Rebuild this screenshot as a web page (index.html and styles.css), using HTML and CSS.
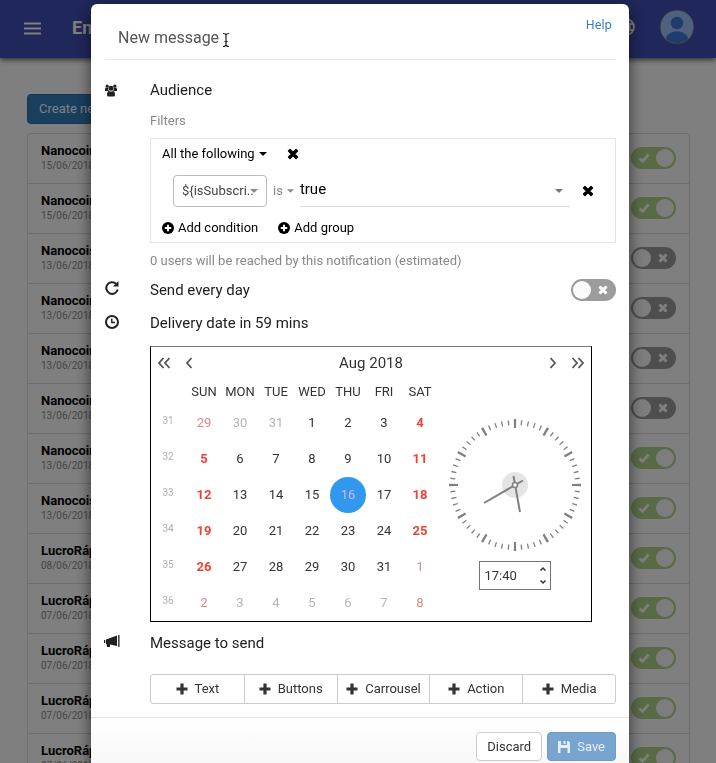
FILE: index.html
```html
<!DOCTYPE html>
<html lang="en">
<head>
<meta charset="utf-8">
<title>New message</title>
<link rel="stylesheet" href="styles.css">
</head>
<body>
<svg class="sprite" aria-hidden="true">
  <symbol id="i-x" viewBox="0 0 12 12"><path d="M3 1.5 6 4.5 9 1.5 10.5 3 7.5 6 10.5 9 9 10.5 6 7.5 3 10.5 1.5 9 4.5 6 1.5 3Z" fill="currentColor" stroke="currentColor" stroke-width="1.4" stroke-linejoin="round"/></symbol>
  <symbol id="i-check" viewBox="0 0 12 12"><path d="M1.5 6.5 4.5 9.3 10.5 2.7" fill="none" stroke="currentColor" stroke-width="2.6"/></symbol>
  <symbol id="i-plus" viewBox="0 0 12 12"><path d="M6 .5v11M.5 6h11" fill="none" stroke="currentColor" stroke-width="3.2"/></symbol>
  <symbol id="i-add" viewBox="0 0 12 12"><circle cx="6" cy="6" r="6" fill="currentColor"/><path d="M6 2.8v6.4M2.8 6h6.4" stroke="#fff" stroke-width="1.9"/></symbol>
  <symbol id="i-caret" viewBox="0 0 8 4"><path d="M0 0h8L4 4z" fill="currentColor"/></symbol>
  <symbol id="i-left" viewBox="0 0 8 14"><path d="M6.5 2 2 7l4.5 5" fill="none" stroke="currentColor" stroke-width="1.8"/></symbol>
  <symbol id="i-right" viewBox="0 0 8 14"><path d="M1.5 2 6 7l-4.5 5" fill="none" stroke="currentColor" stroke-width="1.8"/></symbol>
  <symbol id="i-left2" viewBox="0 0 14 14"><path d="M6.5 2 2 7l4.5 5M12.5 2 8 7l4.5 5" fill="none" stroke="currentColor" stroke-width="1.8"/></symbol>
  <symbol id="i-right2" viewBox="0 0 14 14"><path d="M1.5 2 6 7l-4.5 5M7.5 2 12 7l-4.5 5" fill="none" stroke="currentColor" stroke-width="1.8"/></symbol>
</svg>

<header class="topbar">
  <button class="menu" aria-label="Menu"><svg width="17" height="13" viewBox="0 0 17 13"><path d="M0 1.5h17M0 6.5h17M0 11.5h17" stroke="currentColor" stroke-width="2"/></svg></button>
  <h1 class="brand">En</h1>
  <svg class="globe" width="18" height="18" viewBox="0 0 18 18"><path d="M9 1a8 8 0 1 0 0 16A8 8 0 0 0 9 1ZM9 1c-5 5-5 11 0 16 5-5 5-11 0-16ZM2 6h14M2 12h14" fill="none" stroke="currentColor" stroke-width="1.8"/></svg>
  <svg class="avatar" width="36" height="36" viewBox="0 0 36 36"><circle cx="18" cy="18" r="17" fill="#a0c3ff" stroke="#666" stroke-width="1"/><circle cx="18" cy="14" r="6.2" fill="#4278d8"/><path d="M7 30c0-10 22-10 22 0-5 5.5-17 5.5-22 0Z" fill="#4278d8"/></svg>
</header>
<main class="page">
  <button class="create">Create new message</button>
  <ul class="list">
    <li><div><b>Nanocoins</b><small>15/06/2018</small></div><label class="switch"><input type="checkbox" role="switch" aria-label="Active" checked><svg class="on"><use href="#i-check"/></svg></label></li>
    <li><div><b>Nanocoins</b><small>15/06/2018</small></div><label class="switch"><input type="checkbox" role="switch" aria-label="Active" checked><svg class="on"><use href="#i-check"/></svg></label></li>
    <li><div><b>Nanocoisa</b><small>13/06/2018</small></div><label class="switch"><input type="checkbox" role="switch" aria-label="Active"><svg class="off"><use href="#i-x"/></svg></label></li>
    <li><div><b>Nanocoins</b><small>13/06/2018</small></div><label class="switch"><input type="checkbox" role="switch" aria-label="Active"><svg class="off"><use href="#i-x"/></svg></label></li>
    <li><div><b>Nanocoins</b><small>13/06/2018</small></div><label class="switch"><input type="checkbox" role="switch" aria-label="Active"><svg class="off"><use href="#i-x"/></svg></label></li>
    <li><div><b>Nanocoins</b><small>13/06/2018</small></div><label class="switch"><input type="checkbox" role="switch" aria-label="Active"><svg class="off"><use href="#i-x"/></svg></label></li>
    <li><div><b>Nanocoins</b><small>13/06/2018</small></div><label class="switch"><input type="checkbox" role="switch" aria-label="Active" checked><svg class="on"><use href="#i-check"/></svg></label></li>
    <li><div><b>Nanocoisa</b><small>13/06/2018</small></div><label class="switch"><input type="checkbox" role="switch" aria-label="Active" checked><svg class="on"><use href="#i-check"/></svg></label></li>
    <li><div><b>LucroRápido</b><small>08/06/2018</small></div><label class="switch"><input type="checkbox" role="switch" aria-label="Active" checked><svg class="on"><use href="#i-check"/></svg></label></li>
    <li><div><b>LucroRápido</b><small>07/06/2018</small></div><label class="switch"><input type="checkbox" role="switch" aria-label="Active" checked><svg class="on"><use href="#i-check"/></svg></label></li>
    <li><div><b>LucroRápido</b><small>07/06/2018</small></div><label class="switch"><input type="checkbox" role="switch" aria-label="Active" checked><svg class="on"><use href="#i-check"/></svg></label></li>
    <li><div><b>LucroRápido</b><small>07/06/2018</small></div><label class="switch"><input type="checkbox" role="switch" aria-label="Active" checked><svg class="on"><use href="#i-check"/></svg></label></li>
    <li><div><b>LucroRápido</b><small>07/06/2018</small></div><label class="switch"><input type="checkbox" role="switch" aria-label="Active" checked><svg class="on"><use href="#i-check"/></svg></label></li>
  </ul>
</main>

<div class="overlay">
  <section class="modal" role="dialog" aria-labelledby="title">
    <header class="modal-head">
      <h2 id="title">New message</h2>
      <svg class="ibeam" width="8" height="16" viewBox="0 0 8 16"><path d="M1 1.5Q4 1.5 4 3.5 4 1.5 7 1.5M4 3v10M1 14.5Q4 14.5 4 12.5 4 14.5 7 14.5M2.5 9.5h3" fill="none" stroke="#222" stroke-width="1.2"/></svg>
      <a class="help" href="#help">Help</a>
    </header>

    <div class="sections">
      <section class="section audience">
        <svg class="s-icon" width="12" height="13" viewBox="0 0 12 13" fill="currentColor"><circle cx="2.2" cy="2.2" r="1.6"/><circle cx="9.8" cy="2.2" r="1.6"/><circle cx="6" cy="4.3" r="2.5"/><path d="M0 7V5q0-1.5 1-1.5 1 .8 2 .5 0 2 1 3ZM12 7V5q0-1.5-1-1.5-1 .8-2 .5 0 2-1 3ZM2 11q0-4 2-4 2 1 4 0 2 0 2 4 0 1.5-1.5 1.5h-5Q2 12.5 2 11Z"/></svg>
        <div class="s-body">
          <h3>Audience</h3>
          <p class="hint">Filters</p>
          <div class="filters">
            <div class="group-line">
              <button class="plain">All the following<svg width="8" height="4"><use href="#i-caret"/></svg></button>
              <button class="plain" aria-label="Remove group"><svg width="12" height="12"><use href="#i-x"/></svg></button>
            </div>
            <div class="condition">
              <span class="field"><select aria-label="Variable"><option>${isSubscri..</option></select><svg width="8" height="4"><use href="#i-caret"/></svg></span>
              <button class="plain is">is<svg width="7" height="4"><use href="#i-caret"/></svg></button>
              <span class="value"><select aria-label="Value"><option>true</option><option>false</option></select><svg width="8" height="4"><use href="#i-caret"/></svg></span>
              <button class="plain" aria-label="Remove condition"><svg width="12" height="12"><use href="#i-x"/></svg></button>
            </div>
            <div class="adds">
              <button class="plain"><svg width="12" height="12"><use href="#i-add"/></svg>Add condition</button>
              <button class="plain"><svg width="12" height="12"><use href="#i-add"/></svg>Add group</button>
            </div>
          </div>
          <p class="hint reach">0 users will be reached by this notification (estimated)</p>
        </div>
      </section>

      <section class="section daily">
        <svg class="s-icon" width="14" height="14" viewBox="0 0 14 14"><path d="M11.2 3A5.8 5.8 0 1 0 12.7 8.5" fill="none" stroke="currentColor" stroke-width="2"/><path d="M13.5 0v5.5H8z" fill="currentColor"/></svg>
        <div class="s-body line">
          <h3 id="daily">Send every day</h3>
          <label class="switch"><input type="checkbox" role="switch" aria-labelledby="daily"><svg class="off"><use href="#i-x"/></svg></label>
        </div>
      </section>

      <section class="section delivery">
        <svg class="s-icon" width="14" height="14" viewBox="0 0 14 14" fill="none" stroke="currentColor"><circle cx="7" cy="7" r="6" stroke-width="2"/><path d="M6.8 3.5V7.5H10" stroke-width="1.4"/></svg>
        <div class="s-body">
          <h3>Delivery date in 59 mins</h3>
          <div class="picker">
            <div class="picker-head">
              <button class="plain" aria-label="Previous year"><svg width="14" height="14"><use href="#i-left2"/></svg></button>
              <button class="plain" aria-label="Previous month"><svg width="8" height="14"><use href="#i-left"/></svg></button>
              <span class="month">Aug 2018</span>
              <button class="plain" aria-label="Next month"><svg width="8" height="14"><use href="#i-right"/></svg></button>
              <button class="plain" aria-label="Next year"><svg width="14" height="14"><use href="#i-right2"/></svg></button>
            </div>
            <div class="picker-body">
              <table class="cal">
                <thead><tr><td></td><th>SUN</th><th>MON</th><th>TUE</th><th>WED</th><th>THU</th><th>FRI</th><th>SAT</th></tr></thead>
                <tbody>
                  <tr><th>31</th><td class="out">29</td><td class="out">30</td><td class="out">31</td><td>1</td><td>2</td><td>3</td><td>4</td></tr>
                  <tr><th>32</th><td>5</td><td>6</td><td>7</td><td>8</td><td>9</td><td>10</td><td>11</td></tr>
                  <tr><th>33</th><td>12</td><td>13</td><td>14</td><td>15</td><td><button class="picked">16</button></td><td>17</td><td>18</td></tr>
                  <tr><th>34</th><td>19</td><td>20</td><td>21</td><td>22</td><td>23</td><td>24</td><td>25</td></tr>
                  <tr><th>35</th><td>26</td><td>27</td><td>28</td><td>29</td><td>30</td><td>31</td><td class="out">1</td></tr>
                  <tr><th>36</th><td class="out">2</td><td class="out">3</td><td class="out">4</td><td class="out">5</td><td class="out">6</td><td class="out">7</td><td class="out">8</td></tr>
                </tbody>
              </table>
              <div class="time">
                <svg width="132" height="132" viewBox="-66 -66 132 132" fill="none" stroke="#808080">
                  <circle r="13" fill="#e4e4e4" stroke="none"/>
                  <circle r="62.5" stroke-width="5" pathLength="600" stroke-dasharray="2 8" stroke-dashoffset="1"/>
                  <circle r="61.5" stroke-width="9" pathLength="1200" stroke-dasharray="7 93" stroke-dashoffset="3.5"/>
                  <path d="M8-4.5-31 18M-1.5-9 5 27" stroke-width="2"/>
                  <circle r="2.5" fill="#fff" stroke-width="1.5"/>
                </svg>
                <div class="time-box">
                  <input type="text" value="17:40" aria-label="Time">
                  <div class="steps">
                    <button class="plain" aria-label="Later"><svg width="8" height="6" viewBox="0 0 8 6"><path d="M1.5 4.5 4 2l2.5 2.5" fill="none" stroke="#333" stroke-width="1.5"/></svg></button>
                    <button class="plain" aria-label="Earlier"><svg width="8" height="6" viewBox="0 0 8 6"><path d="M1.5 1.5 4 4l2.5-2.5" fill="none" stroke="#333" stroke-width="1.5"/></svg></button>
                  </div>
                </div>
              </div>
            </div>
          </div>
        </div>
      </section>

      <section class="section message">
        <svg class="s-icon" width="16" height="13" viewBox="0 0 16 13" fill="currentColor"><path d="M2 4.5 13 .5v10.5L6 9.5V12H3L2.5 9H2ZM0 5h1.3v3H0ZM14.2 0h1.3v12h-1.3Z"/></svg>
        <div class="s-body">
          <h3>Message to send</h3>
          <div class="kinds">
            <button><svg width="12" height="12"><use href="#i-plus"/></svg>Text</button>
            <button><svg width="12" height="12"><use href="#i-plus"/></svg>Buttons</button>
            <button><svg width="12" height="12"><use href="#i-plus"/></svg>Carrousel</button>
            <button><svg width="12" height="12"><use href="#i-plus"/></svg>Action</button>
            <button><svg width="12" height="12"><use href="#i-plus"/></svg>Media</button>
          </div>
        </div>
      </section>
    </div>

    <footer class="modal-foot">
      <button class="btn">Discard</button>
      <button class="btn primary"><svg width="12" height="12" viewBox="0 0 12 12" fill="currentColor"><path d="M0 0h3v4h6V0h1.5L12 1.5V12H9.5V7h-7v5H0ZM5.5 0h2v3h-2Z"/></svg>Save</button>
    </footer>
  </section>
</div>
</body>
</html>
```
FILE: styles.css
```css
* { box-sizing: border-box; }
html, body { height: 100%; }
body {
  margin: 0;
  overflow: hidden;
  background: #fff;
  color: #212121;
  font: 13px/18px Roboto, sans-serif;
}
h1, h2, h3, p, ul { margin: 0; padding: 0; font-weight: 400; }
button, input, select { font: inherit; color: inherit; margin: 0; }
svg { display: block; flex: none; }
.sprite { position: absolute; width: 0; height: 0; }
.plain { display: flex; align-items: center; padding: 0; border: 0; background: none; }

/* Page behind the dialog */
.topbar {
  display: flex;
  align-items: center;
  height: 58px;
  padding: 0 21px 4px 24px;
  background: #404eb4;
  color: #fff;
  box-shadow: 0 2px 5px rgba(0, 0, 0, .6);
}
.menu { padding: 2px 0 0; border: 0; background: none; color: inherit; }
.brand { flex: 1; margin: 2px 0 0 31px; font-size: 18px; font-weight: 700; }
.globe { margin-right: 24px; }
.page { padding: 36px 26px 0 27px; }
.create {
  height: 30px;
  padding: 0 11px;
  border: 1px solid #2e6da4;
  border-radius: 4px;
  background: #337fbf;
  color: #fff;
}
.list { margin-top: 9px; border: 1px solid #ddd; border-radius: 4px; list-style: none; }
.list li {
  display: flex;
  align-items: center;
  justify-content: space-between;
  height: 50px;
  padding: 0 13px 2px;
  border-bottom: 1px solid #ddd;
}
.list b { display: block; line-height: 16px; color: #000; }
.list small { display: block; font-size: 10px; line-height: 14px; color: #888; }

.switch { position: relative; display: block; width: 45px; height: 22px; }
.switch input {
  appearance: none;
  display: block;
  width: 100%;
  height: 100%;
  margin: 0;
  border-radius: 11px;
  background: #9c9c9c;
}
.switch input::after {
  content: "";
  position: absolute;
  top: 2px;
  left: 2px;
  width: 18px;
  height: 18px;
  border-radius: 50%;
  background: #fafafa;
}
.switch input:checked { background: #b0d68c; }
.switch input:checked::after { left: 25px; }
.switch svg { position: absolute; top: 6px; width: 10px; height: 10px; color: #fff; }
.switch .on { left: 7px; top: 5px; width: 12px; height: 12px; }
.switch .off { right: 8px; }

/* Dialog */
.overlay {
  position: fixed;
  inset: 0;
  overflow: hidden;
  padding: 4px 87px 0 91px;
  background: rgba(0, 0, 0, .5);
}
.modal { border-radius: 6px; background: #fff; box-shadow: 0 5px 15px rgba(0, 0, 0, .6); }
.modal-head {
  display: flex;
  align-items: center;
  height: 56px;
  margin: 0 13px 0 14px;
  padding: 13px 4px 0 13px;
  border-bottom: 1px solid #e5e5e5;
}
.modal-head h2 { font-size: 16px; line-height: 20px; color: #555; }
.ibeam { margin: 4px 0 0 3px; }
.help {
  align-self: flex-start;
  margin: -1px 0 0 auto;
  font-family: "Noto Sans", sans-serif;
  font-size: 12px;
  color: #337ab7;
  text-decoration: none;
}
.sections { padding: 20px 13px 13px 14px; }
.section { display: grid; grid-template-columns: 45px minmax(0, 1fr); align-items: start; }
.s-icon { margin-top: 4px; }
.daily .s-icon, .delivery .s-icon { margin-top: 2px; }
.message .s-icon { margin: 2px 0 0 -1px; }
h3 { font-size: 15px; line-height: 20px; }
.hint { margin-top: 12px; color: #888; }
.reach { margin-top: 9px; }
.filters { margin-top: 8px; padding: 6px 21px 5px 11px; border: 1px solid #e5e5e5; color: #000; }
.group-line, .adds { display: flex; gap: 20px; }
.group-line .plain, .adds .plain { height: 18px; gap: 4px; }
.condition { display: flex; align-items: center; margin: 12px 0; padding-left: 11px; }
.field, .value { position: relative; display: flex; align-items: center; }
.field select {
  appearance: none;
  width: 94px;
  height: 32px;
  padding: 0 8px;
  border: 1px solid #bbb;
  border-radius: 4px;
  background: #fff;
  color: #444;
}
.field svg { position: absolute; right: 9px; color: #888; }
.is { gap: 4px; margin: 0 6px; color: #888; }
.value { flex: 1; margin-right: 12px; }
.value select {
  appearance: none;
  width: 100%;
  height: 32px;
  padding: 0 0 4px;
  border: 0;
  border-bottom: 1px solid #ddd;
  background: none;
  font-size: 15px;
}
.value svg { position: absolute; right: 7px; color: #777; }
.daily { margin-top: 9px; }
.line { display: flex; justify-content: space-between; align-items: center; }
.delivery { margin-top: 12px; }

.picker { width: 442px; max-width: 100%; margin-top: 13px; border: 1px solid #000; border-top-color: #777; }
.picker-head { display: flex; align-items: center; gap: 14px; height: 32px; padding: 0 6px; color: #555; }
.month { flex: 1; text-align: center; font-size: 15px; color: #333; }
.picker-body { display: flex; }
.cal { border-collapse: collapse; table-layout: fixed; width: 288px; margin-left: -1px; color: #333; }
.cal th, .cal td { width: 36px; height: 36px; padding: 0; text-align: center; font-weight: 400; }
.cal thead th, .cal thead td { height: 26px; }
.cal tbody th { padding-bottom: 4px; font-size: 10px; color: #b0b0b0; }
.cal tbody td:nth-child(2), .cal tbody td:nth-child(8) { color: #ee4237; font-weight: 700; }
.cal tbody td.out { color: #b5b5b5; font-weight: 400; }
.cal tbody td.out:nth-child(2), .cal tbody td.out:nth-child(8) { color: #e08585; font-weight: 400; }
.picked {
  display: block;
  width: 36px;
  height: 36px;
  padding: 0;
  border: 0;
  border-radius: 50%;
  background: #3298ee;
  color: #d3b5f5;
}
.time { flex: 1; display: flex; flex-direction: column; align-items: center; gap: 10px; padding-top: 40px; }
.time-box { display: flex; align-items: center; width: 72px; height: 29px; padding: 0 3px 0 5px; border: 1px solid #757575; color: #333; }
.time-box input { flex: 1; min-width: 0; padding: 0; border: 0; background: none; }
.steps { display: flex; flex-direction: column; gap: 7px; }

.message { margin-top: 11px; }
.kinds { display: grid; grid-template-columns: repeat(5, 1fr); margin-top: 21px; border: 1px solid #ccc; border-radius: 3px; }
.kinds button {
  display: flex;
  align-items: center;
  justify-content: center;
  gap: 7px;
  height: 28px;
  padding: 0;
  border: 0;
  background: none;
  color: #333;
}
.kinds button + button { border-left: 1px solid #ccc; }

.modal-foot {
  display: flex;
  justify-content: flex-end;
  gap: 5px;
  padding: 14px 13px;
  border-top: 1px solid #e5e5e5;
  background: linear-gradient(#fff, #f6f6f6);
}
.btn { display: flex; align-items: center; gap: 7px; height: 29px; padding: 0 10px; border: 1px solid #ccc; border-radius: 4px; background: #fff; color: #333; }
.btn.primary { border-color: #6d9cc3; background: #77a5cf; color: #e6eef6; }
```
